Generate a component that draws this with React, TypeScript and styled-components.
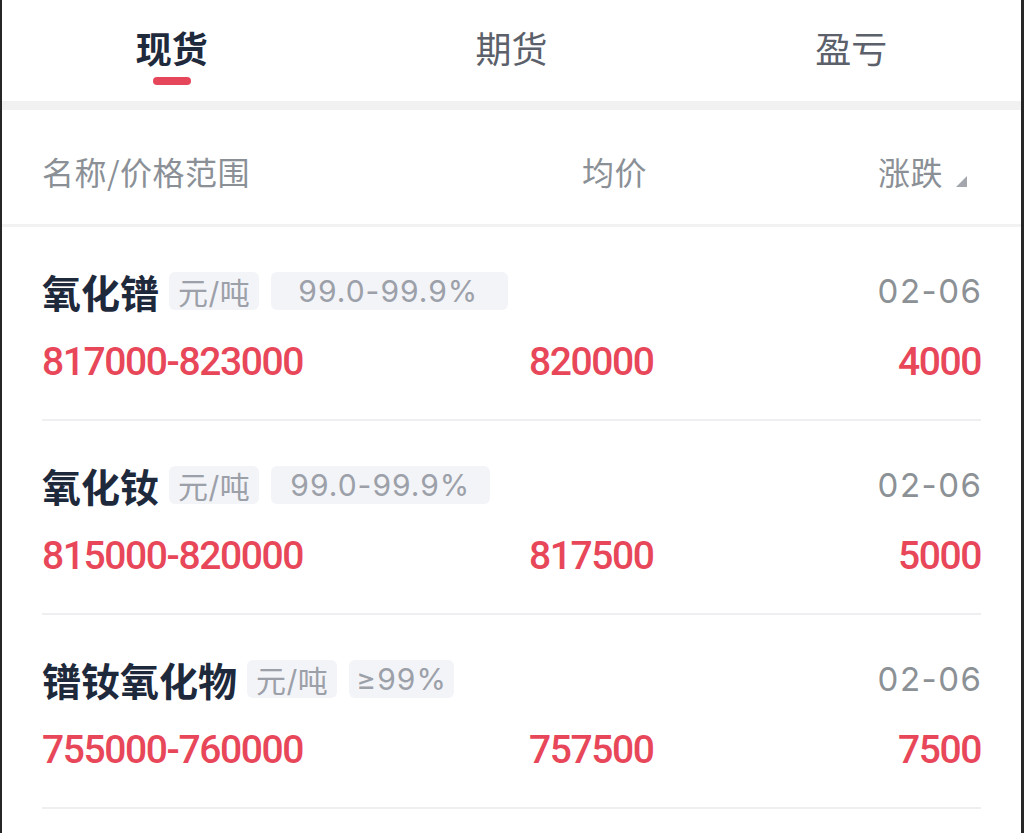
import styled, { createGlobalStyle } from "styled-components";

interface Item {
  name: string;
  unit: string;
  spec: string;
  specPad: [number, number];
  date: string;
  range: string;
  avg: string;
  change: string;
}

const items: Item[] = [
  {
    name: "氧化镨",
    unit: "元/吨",
    spec: "99.0-99.9%",
    specPad: [27, 30],
    date: "02-06",
    range: "817000-823000",
    avg: "820000",
    change: "4000",
  },
  {
    name: "氧化钕",
    unit: "元/吨",
    spec: "99.0-99.9%",
    specPad: [19, 20],
    date: "02-06",
    range: "815000-820000",
    avg: "817500",
    change: "5000",
  },
  {
    name: "镨钕氧化物",
    unit: "元/吨",
    spec: "≥99%",
    specPad: [7, 7],
    date: "02-06",
    range: "755000-760000",
    avg: "757500",
    change: "7500",
  },
];

const tabs = ["现货", "期货", "盈亏"];

function SortMark() {
  return (
    <svg width="11" height="11" viewBox="0 0 11 11">
      <path d="M11 0 L11 11 L0 11 Z" fill="#a3a7ad" />
    </svg>
  );
}

export default function App() {
  return (
    <>
      <GlobalStyle />
      <Frame>
        <TabBar>
          {tabs.map((t, i) => (
            <Tab key={t}>
              <TabLabel active={i === 0}>{t}</TabLabel>
              <TabLine active={i === 0} />
            </Tab>
          ))}
        </TabBar>
        <Band />
        <HeaderRow>
          <HeadCell>名称/价格范围</HeadCell>
          <HeadCell indent={53}>均价</HeadCell>
          <HeadCell>
            涨跌
            <SortWrap>
              <SortMark />
            </SortWrap>
          </HeadCell>
        </HeaderRow>
        <List>
          {items.map((it) => (
            <Row key={it.name}>
              <TitleLine>
                <Name>{it.name}</Name>
                <Tag>{it.unit}</Tag>
                <Tag pl={it.specPad[0]} pr={it.specPad[1]} spaced>
                  {it.spec}
                </Tag>
                <DateText>{it.date}</DateText>
              </TitleLine>
              <PriceLine>
                <Price>{it.range}</Price>
                <Price>{it.avg}</Price>
                <Price align="right">{it.change}</Price>
              </PriceLine>
            </Row>
          ))}
        </List>
      </Frame>
    </>
  );
}

const GlobalStyle = createGlobalStyle`
  html, body {
    margin: 0;
    padding: 0;
    background: #ffffff;
  }
  body {
    font-family: "Noto Sans CJK SC", "Noto Sans", sans-serif;
  }
  * {
    box-sizing: border-box;
  }
`;

const Frame = styled.div`
  width: 1024px;
  height: 833px;
  overflow: hidden;
  background: #ffffff;
  border-left: 2px solid #262626;
  border-right: 3px solid #262626;
`;

const TabBar = styled.div`
  display: grid;
  grid-template-columns: repeat(3, 1fr);
  height: 101px;
`;

const Tab = styled.div`
  display: flex;
  flex-direction: column;
  align-items: center;
  padding-top: 25px;
`;

const TabLabel = styled.div<{ active: boolean }>`
  font-family: "Noto Sans CJK SC", sans-serif;
  font-size: 36px;
  line-height: 44px;
  font-weight: ${(p) => (p.active ? 700 : 400)};
  color: ${(p) => (p.active ? "#1f2a3d" : "#5b606a")};
`;

const TabLine = styled.div<{ active: boolean }>`
  width: 38px;
  height: 8px;
  margin-top: 8px;
  border-radius: 4px;
  background: ${(p) => (p.active ? "#e6465a" : "transparent")};
`;

const Band = styled.div`
  height: 9px;
  background: #f1f1f2;
`;

const HeaderRow = styled.div`
  display: grid;
  grid-template-columns: 487px 1fr auto;
  align-items: center;
  padding: 41px 54px 33px 40px;
  border-bottom: 3px solid #f2f2f3;
`;

const HeadCell = styled.div<{ indent?: number }>`
  display: flex;
  align-items: center;
  font-size: 32px;
  line-height: 40px;
  letter-spacing: 0.5px;
  color: #8a9096;
  padding-left: ${(p) => p.indent ?? 0}px;
`;

const SortWrap = styled.span`
  display: inline-flex;
  margin-left: 13px;
  margin-top: 20px;
`;

const List = styled.div`
  padding: 0 40px;
`;

const Row = styled.div`
  padding: 44px 0 35px;
  border-bottom: 2px solid #efeff1;
`;

const TitleLine = styled.div`
  display: flex;
  align-items: center;
  height: 40px;
`;

const Name = styled.div`
  font-family: "Noto Sans CJK SC", sans-serif;
  font-size: 39px;
  font-weight: 700;
  line-height: 40px;
  color: #1e2a3c;
  margin-right: 10px;
`;

const Tag = styled.div<{ pl?: number; pr?: number; spaced?: boolean }>`
  display: flex;
  align-items: center;
  height: 38px;
  padding: 0 ${(p) => p.pr ?? 9}px 0 ${(p) => p.pl ?? 9}px;
  margin-right: 12px;
  border-radius: 6px;
  background: #f3f4f8;
  color: #9ca0a8;
  font-family: Inter, "Noto Sans CJK SC", sans-serif;
  font-size: 30px;
  letter-spacing: ${(p) => (p.spaced ? "1px" : "0.5px")};
`;

const DateText = styled.div`
  margin-left: auto;
  margin-right: -1.5px;
  font-family: Inter, "Noto Sans", sans-serif;
  font-size: 33px;
  letter-spacing: 1.5px;
  color: #8c9196;
`;

const PriceLine = styled.div`
  display: grid;
  grid-template-columns: 487px 1fr auto;
  align-items: center;
  margin-top: 29px;
  height: 44px;
`;

const Price = styled.div<{ align?: "left" | "right" }>`
  font-family: Roboto, "Liberation Sans", sans-serif;
  font-size: 39px;
  font-weight: 500;
  letter-spacing: -1.4px;
  line-height: 44px;
  color: #e8475a;
  text-align: ${(p) => p.align ?? "left"};
`;
